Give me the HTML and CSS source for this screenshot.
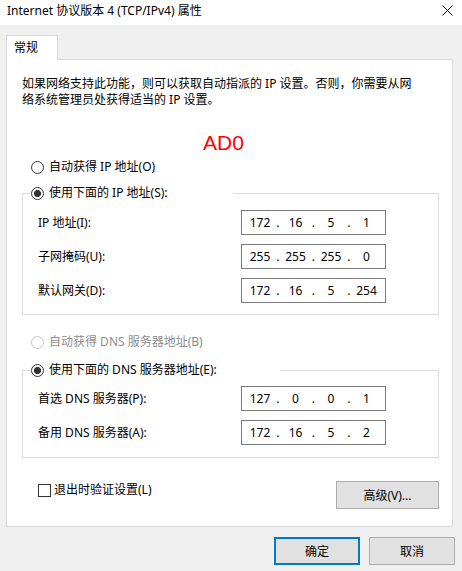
FILE: index.html
```html
<!DOCTYPE html>
<html lang="zh-CN">
<head>
    <meta charset="UTF-8">
    <title>Internet 协议版本 4 (TCP/IPv4) 属性</title>
    <link rel="stylesheet" href="styles.css">
</head>
<body>
    <div class="titlebar">
        <span class="title">Internet 协议版本 4 (TCP/IPv4) 属性</span>
        <svg class="close" width="11" height="11" viewBox="0 0 11 11">
            <path d="M0.5 0.5 L10.5 10.5 M10.5 0.5 L0.5 10.5" stroke="#000" stroke-width="1" fill="none"/>
        </svg>
    </div>

    <div class="tabs">
        <div class="tab">常规</div>
    </div>

    <div class="panel">
        <p class="desc">如果网络支持此功能，则可以获取自动指派的 IP 设置。否则，你需要从网<br>络系统管理员处获得适当的 IP 设置。</p>

        <div class="tag">AD0</div>

        <label class="option">
            <input type="radio" name="ip">
            <span>自动获得 IP 地址(O)</span>
        </label>

        <fieldset class="group">
            <legend class="legend-ip">
                <label class="option">
                    <input type="radio" name="ip" checked>
                    <span>使用下面的 IP 地址(S):</span>
                </label>
            </legend>
            <div class="row">
                <span class="label">IP 地址(I):</span>
                <div class="ip"><span class="oct">172</span><span class="dot">.</span><span class="oct">16</span><span class="dot">.</span><span class="oct">5</span><span class="dot">.</span><span class="oct">1</span></div>
            </div>
            <div class="row">
                <span class="label">子网掩码(U):</span>
                <div class="ip"><span class="oct">255</span><span class="dot">.</span><span class="oct">255</span><span class="dot">.</span><span class="oct">255</span><span class="dot">.</span><span class="oct">0</span></div>
            </div>
            <div class="row">
                <span class="label">默认网关(D):</span>
                <div class="ip"><span class="oct">172</span><span class="dot">.</span><span class="oct">16</span><span class="dot">.</span><span class="oct">5</span><span class="dot">.</span><span class="oct">254</span></div>
            </div>
        </fieldset>

        <label class="option option-dns disabled">
            <input type="radio" name="dns" disabled>
            <span>自动获得 DNS 服务器地址(B)</span>
        </label>

        <fieldset class="group group-dns">
            <legend class="legend-dns">
                <label class="option">
                    <input type="radio" name="dns" checked>
                    <span>使用下面的 DNS 服务器地址(E):</span>
                </label>
            </legend>
            <div class="row">
                <span class="label">首选 DNS 服务器(P):</span>
                <div class="ip"><span class="oct">127</span><span class="dot">.</span><span class="oct">0</span><span class="dot">.</span><span class="oct">0</span><span class="dot">.</span><span class="oct">1</span></div>
            </div>
            <div class="row">
                <span class="label">备用 DNS 服务器(A):</span>
                <div class="ip"><span class="oct">172</span><span class="dot">.</span><span class="oct">16</span><span class="dot">.</span><span class="oct">5</span><span class="dot">.</span><span class="oct">2</span></div>
            </div>
        </fieldset>

        <div class="panel-footer">
            <label class="check">
                <input type="checkbox">
                <span>退出时验证设置(L)</span>
            </label>
            <button class="btn btn-advanced">高级(V)...</button>
        </div>
    </div>

    <div class="dialog-buttons">
        <button class="btn btn-default">确定</button>
        <button class="btn">取消</button>
    </div>
</body>
</html>
```

FILE: styles.css
```css
body {
    margin: 0;
    width: 462px;
    height: 571px;
    background: #f0f0f0;
    font-family: "Noto Sans", "Noto Sans CJK SC", sans-serif;
    font-size: 12px;
    line-height: 16px;
    color: #000;
    overflow: hidden;
}
.titlebar {
    height: 25px;
    background: #fff;
    display: flex;
    justify-content: space-between;
    align-items: flex-start;
    padding: 0 9px 0 7px;
}
.title {
    margin-top: 3px;
}
.close {
    margin-top: 5px;
}
.tabs {
    display: flex;
    padding: 10px 0 0 6px;
}
.tab {
    position: relative;
    z-index: 1;
    width: 52px;
    height: 25px;
    box-sizing: border-box;
    margin-bottom: -1px;
    padding-left: 7px;
    border: 1px solid #d9d9d9;
    border-bottom: none;
    background: #fff;
    line-height: 23px;
}
.panel {
    margin-left: 6px;
    width: 447px;
    height: 468px;
    box-sizing: border-box;
    border: 1px solid #d9d9d9;
    background: #fff;
    padding: 16px 13px 0 15px;
}
.desc {
    margin: 0;
}
.tag {
    margin: 23px 0 0 181px;
    font-family: "Liberation Sans", Arial, sans-serif;
    font-size: 21px;
    line-height: 24px;
    color: #ff0000;
}
.option {
    display: flex;
    align-items: center;
    height: 16px;
    padding-left: 9px;
    margin-top: 4px;
}
.option input {
    appearance: none;
    width: 13px;
    height: 13px;
    margin: 0 5px 0 0;
    border: 1px solid #333;
    border-radius: 50%;
    background: #fff;
    box-sizing: border-box;
}
.option input:checked {
    background: radial-gradient(circle, #333 0, #333 3.3px, #fff 3.8px);
}
.option.disabled {
    color: #8d8d8d;
}
.option.disabled input {
    border-color: #c6c6c6;
}
.option-dns {
    margin-top: 19px;
}
.group {
    margin: 10px 0 0;
    padding: 9px 0 11px 7px;
    border: 1px solid #dcdcdc;
    min-width: 0;
}
.group-dns {
    margin-top: 12px;
    padding-top: 8px;
    padding-bottom: 12px;
}
.group legend {
    padding: 0;
    background: #fff;
}
.group legend .option {
    margin: 0;
    padding-left: 1px;
}
.legend-ip {
    width: 203px;
}
.legend-dns {
    width: 250px;
}
.row {
    display: flex;
    align-items: center;
    height: 25px;
    padding-left: 8px;
}
.row + .row {
    margin-top: 9px;
}
.label {
    width: 203px;
}
.ip {
    display: flex;
    align-items: center;
    width: 145px;
    height: 25px;
    box-sizing: border-box;
    border: 1px solid #7a7a7a;
    padding-left: 4px;
}
.oct {
    width: 28px;
    text-align: center;
}
.dot {
    width: 7.5px;
    text-align: center;
}
.panel-footer {
    display: flex;
    justify-content: space-between;
    align-items: flex-start;
    margin-top: 23px;
    width: 417px;
}
.check {
    display: flex;
    align-items: center;
    height: 16px;
    margin: 1px 0 0 16px;
}
.check input {
    appearance: none;
    width: 13px;
    height: 13px;
    margin: 0 3px 0 0;
    border: 1px solid #333;
    background: #fff;
}
.btn {
    width: 86px;
    height: 28px;
    box-sizing: border-box;
    border: 1px solid #adadad;
    background: #e1e1e1;
    font-family: inherit;
    font-size: 12px;
    color: #000;
    padding: 0;
}
.btn-advanced {
    width: 103px;
}
.btn-default {
    border: 2px solid #0078d7;
}
.dialog-buttons {
    display: flex;
    justify-content: flex-end;
    gap: 9px;
    padding: 10px 7px 0 0;
}
```
